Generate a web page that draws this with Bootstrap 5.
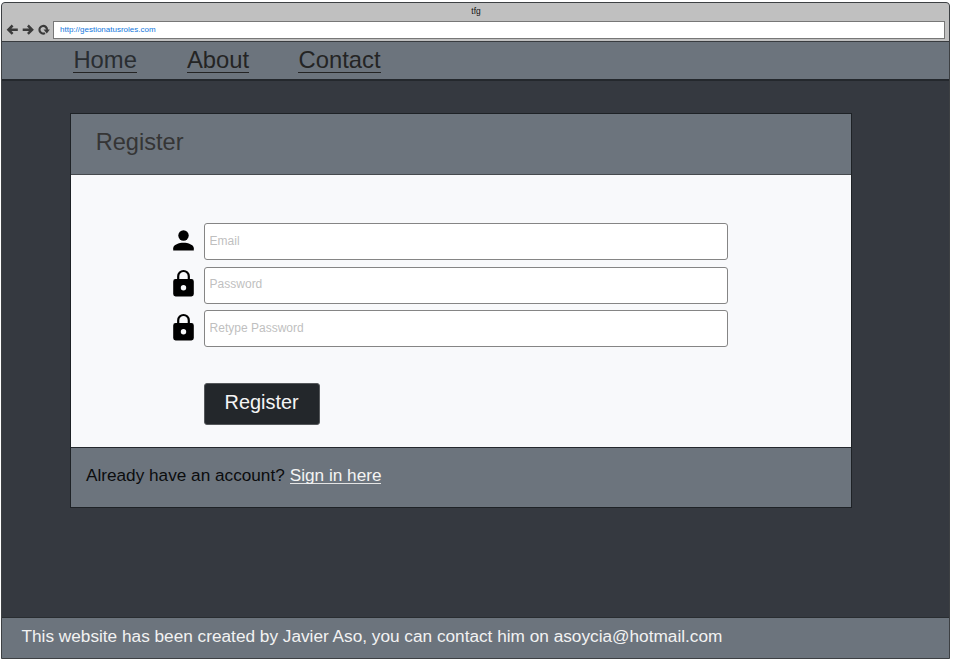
<!DOCTYPE html>
<html lang="en">
<head>
<meta charset="utf-8">
<meta name="viewport" content="width=device-width, initial-scale=1">
<title>tfg</title>
<link rel="stylesheet" href="https://cdn.jsdelivr.net/npm/bootstrap@5.3.0/dist/css/bootstrap.min.css">
<style>
body{font-family:"Liberation Sans",Arial,sans-serif;background:#fff;height:659px;overflow:hidden;padding:2px 3px 0 1px;line-height:1}
.browser{height:657px;background:#353940;border:1px solid #3d4043;border-radius:4px 4px 0 0;overflow:hidden}
.chrome{height:38px;background:#c0c0c0;flex:none}
.tab-title{height:18px;font-size:8.4px;line-height:17px;color:#111;padding-left:1px}
.address{height:18px;border:1px solid #777;background:#fff;color:#1277dd;font-size:8px;line-height:15px;padding-left:6px;margin-left:2px;margin-right:4px}
.tools{padding-left:4px}
.site-nav{height:40px;background:#6c747d;border-top:1px solid #383b3f;border-bottom:2px solid #24282d;padding-left:71.4px;gap:50px;flex:none}
.site-nav a{color:#242424;font-size:23.8px;line-height:24px;height:25px;border-bottom:1px solid #242424;margin-top:6px}
.site-nav a:first-child{color:#292d31}
.site-nav a:last-child{margin-left:-.6px}
.panel{width:782px;height:395px;margin:32px 0 0 68px;border:1px solid #1e2226;border-radius:0;background:#f8f9fb}
.panel-head{height:61px;background:#6c747d;border-bottom:1px solid #45494d;color:#353535;font-size:23.6px;line-height:24px;padding:16px 0 0 24.700px}
.panel-main{padding:48.400px 0 0 101px}
.field{height:37px;gap:9px}
.field + .field{margin-top:6.4px}
.field input{width:524px;height:37px;border:1px solid #858585;border-radius:3px;font-size:12px;padding:0 5px 2px;color:#333;background:#fff;margin-left:-.4px}
.field input::placeholder{color:#bfbfbf;opacity:1}
.glyph{width:23px;height:30px;flex:none;margin-top:-2px}
.btn-register{width:116px;height:42px;margin:35.400px 0 0 31.600px;padding:0 0 2px;background:#23272b;border:1px solid #55585b;border-radius:3px;color:#f5f5f5;font-size:19.9px;line-height:1}
.panel-foot{height:60px;background:#6c747d;border-top:1px solid #24282d;font-size:17.2px;line-height:20px;padding:17px 0 0 15px;color:#0b0c0d}
.panel-foot a{color:#f4f4f4;height:19px;border-bottom:1px solid #e4e4e4;margin-left:5px}
.site-foot{height:41px;background:#6c747d;border-top:1px solid #292d31;color:#f2f2f2;font-size:17.23px;line-height:20px;padding:8px 0 0 19.500px;flex:none;white-space:nowrap}
</style>
<script src="https://cdn.jsdelivr.net/npm/bootstrap@5.3.0/dist/js/bootstrap.bundle.min.js"></script>
</head>
<body>
<div class="browser d-flex flex-column">
  <div class="chrome">
    <div class="tab-title text-center">tfg</div>
    <div class="tools d-flex align-items-center">
      <svg width="45" height="18" viewBox="0 0 45 18" fill="none" stroke="#3b3b3b" stroke-width="2.5">
        <path d="M6.600 4.500 2.400 8.700l4.200 4.200M2.500 8.700h9.300M21.900 4.500l4.200 4.200-4.200 4.200M26 8.700h-9.300"/>
        <path d="M39 12.100A3.800 3.800 0 1 1 41 8.900" stroke-width="2.200"/>
        <path d="M37.500 8.500h6.300l-3 4z" fill="#3b3b3b" stroke="none"/>
      </svg>
      <div class="address flex-grow-1">http://gestionatusroles.com</div>
    </div>
  </div>
  <nav class="site-nav d-flex align-items-start">
    <a class="text-decoration-none" href="#">Home</a>
    <a class="text-decoration-none" href="#">About</a>
    <a class="text-decoration-none" href="#">Contact</a>
  </nav>
  <main class="flex-grow-1">
    <form class="panel d-flex flex-column" onsubmit="return false">
      <div class="panel-head">Register</div>
      <div class="panel-main flex-grow-1">
        <div class="field d-flex align-items-center">
          <svg class="glyph" viewBox="0 0 23 30"><circle cx="11.500" cy="9.500" r="5.200"/><path d="M1.200 24.500v-2.300c0-3.400 5.800-5.400 10.300-5.400s10.300 2 10.300 5.400v2.300z"/></svg>
          <input class="form-control" type="text" placeholder="Email" aria-label="Email">
        </div>
        <div class="field d-flex align-items-center">
          <svg class="glyph" viewBox="0 0 23 30"><path d="M6.200 11V7.300a5.300 5.300 0 0 1 10.600 0V11" fill="none" stroke="#000" stroke-width="2.200"/><path fill-rule="evenodd" d="M3.600 10h15.800a2.400 2.400 0 0 1 2.400 2.400v12.700a2.400 2.400 0 0 1-2.400 2.400H3.600a2.400 2.400 0 0 1-2.400-2.400V12.400A2.400 2.400 0 0 1 3.600 10zM11.500 16a2.700 2.700 0 1 0 0 5.400 2.700 2.700 0 0 0 0-5.400z"/></svg>
          <input class="form-control" type="password" placeholder="Password" aria-label="Password">
        </div>
        <div class="field d-flex align-items-center">
          <svg class="glyph" viewBox="0 0 23 30"><path d="M6.200 11V7.300a5.300 5.300 0 0 1 10.600 0V11" fill="none" stroke="#000" stroke-width="2.200"/><path fill-rule="evenodd" d="M3.600 10h15.800a2.400 2.400 0 0 1 2.400 2.400v12.700a2.400 2.400 0 0 1-2.400 2.400H3.600a2.400 2.400 0 0 1-2.400-2.400V12.400A2.400 2.400 0 0 1 3.600 10zM11.500 16a2.700 2.700 0 1 0 0 5.400 2.700 2.700 0 0 0 0-5.400z"/></svg>
          <input class="form-control" type="password" placeholder="Retype Password" aria-label="Retype Password">
        </div>
        <button class="btn btn-register" type="submit">Register</button>
      </div>
      <div class="panel-foot d-flex align-items-start"><span>Already have an account?</span><a class="text-decoration-none" href="#">Sign in here</a></div>
    </form>
  </main>
  <footer class="site-foot">This website has been created by Javier Aso, you can contact him on asoycia@hotmail.com</footer>
</div>
</body>
</html>
